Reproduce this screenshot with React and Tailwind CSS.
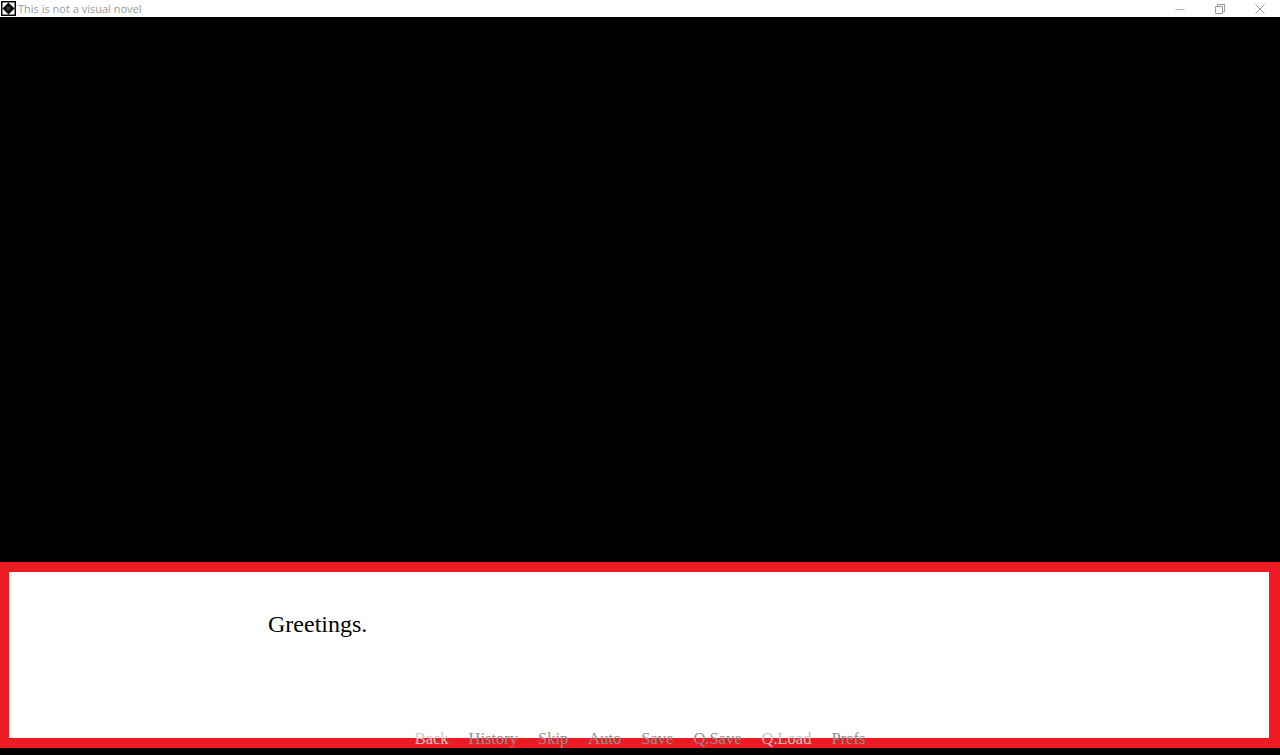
import React from "react";

const QUICK_MENU = [
  { label: "Back", color: "text-[#d9c9c9]" },
  { label: "History", color: "text-[#8f8f8f]" },
  { label: "Skip", color: "text-[#8f8f8f]" },
  { label: "Auto", color: "text-[#8f8f8f]" },
  { label: "Save", color: "text-[#8f8f8f]" },
  { label: "Q.Save", color: "text-[#8f8f8f]" },
  { label: "Q.Load", color: "text-[#c4c4c4]" },
  { label: "Prefs", color: "text-[#8f8f8f]" },
];

function AppIcon() {
  return (
    <svg width="15" height="15" viewBox="0 0 15 15" className="shrink-0">
      <rect width="15" height="15" fill="#000" />
      <rect x="1.5" y="1.5" width="12" height="12" fill="#fff" />
      <path d="M7.5 1.5 13.5 7.5 7.5 13.5 1.5 7.5Z" fill="#000" />
      <rect x="5.5" y="5.5" width="4" height="4" fill="#333" />
    </svg>
  );
}

function TitleBar() {
  return (
    <div className="h-[17px] bg-white flex items-center shrink-0 relative">
      <div className="pl-[1px] flex items-center gap-[2px]">
        <AppIcon />
        <span className="text-[11px] text-[#999] font-['Open_Sans','Noto_Sans',sans-serif] leading-none">
          This is not a visual novel
        </span>
      </div>
      <div className="ml-auto flex items-center text-[#9a9a9a]">
        <svg width="40" height="14" viewBox="0 0 40 14">
          <path d="M15.5 7.5h9" stroke="#b5b5b5" fill="none" />
        </svg>
        <svg width="40" height="14" viewBox="0 0 40 14">
          <path d="M15.5 4.5h7v7h-7zM17.5 4.5v-2h7v7h-2" stroke="#999" fill="none" />
        </svg>
        <svg width="40" height="14" viewBox="0 0 40 14">
          <path d="M15.5 2.5l9 9M24.5 2.5l-9 9" stroke="#999" fill="none" />
        </svg>
      </div>
    </div>
  );
}

export default function App() {
  return (
    <div className="w-[1280px] h-[755px] bg-black flex flex-col overflow-hidden relative font-['Liberation_Serif',serif]">
      <TitleBar />

      {/* game area */}
      <div className="flex-1" />

      {/* dialogue box */}
      <div className="h-[186px] mb-[7px] bg-[#ed1c24] pt-[10px] pb-[10px] pl-[9px] pr-[11px] shrink-0">
        <div className="h-full bg-white pl-[259px] pt-[37px]">
          <p className="text-[24px] leading-[30px] text-black">Greetings.</p>
        </div>
      </div>

      {/* quick menu sits on top of the box edge */}
      <div className="absolute left-0 right-0 bottom-[6px] flex justify-center gap-[20px] text-[16.5px] leading-[20px]">
        {QUICK_MENU.map((item) => (
          <span key={item.label} className={item.color}>
            {item.label}
          </span>
        ))}
      </div>
    </div>
  );
}
